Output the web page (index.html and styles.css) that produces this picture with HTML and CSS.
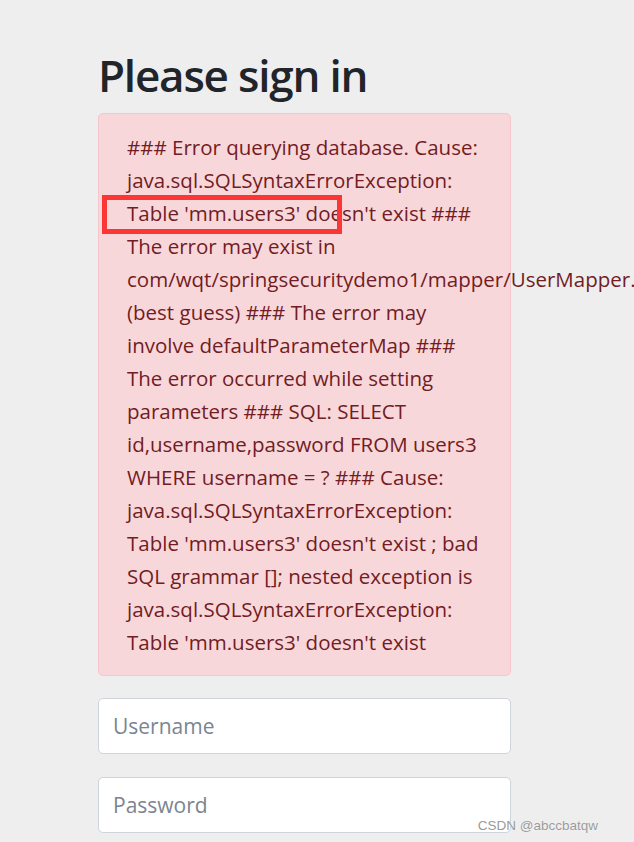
FILE: index.html
```html
<!DOCTYPE html>
<html lang="en">
<head>
<meta charset="utf-8">
<title>Please sign in</title>
<link rel="stylesheet" href="styles.css">
</head>
<body>
<div class="container">
  <form class="form-signin">
    <h2 class="form-signin-heading">Please sign in</h2>
    <div class="alert">
      ### Error querying database. Cause:<br>
      java.sql.SQLSyntaxErrorException:<br>
      Table 'mm.users3' doesn't exist ###<br>
      The error may exist in<br>
      com/wqt/springsecuritydemo1/mapper/UserMapper.xml<br>
      (best guess) ### The error may<br>
      involve defaultParameterMap ###<br>
      The error occurred while setting<br>
      parameters ### SQL: SELECT<br>
      id,username,password FROM users3<br>
      WHERE username = ? ### Cause:<br>
      java.sql.SQLSyntaxErrorException:<br>
      Table 'mm.users3' doesn't exist ; bad<br>
      SQL grammar []; nested exception is<br>
      java.sql.SQLSyntaxErrorException:<br>
      Table 'mm.users3' doesn't exist
      <span class="mark"></span>
    </div>
    <input class="form-control" type="text" placeholder="Username">
    <input class="form-control" type="password" placeholder="Password">
  </form>
</div>
<div class="watermark">CSDN @abccbatqw</div>
</body>
</html>
```
FILE: styles.css
```css
html, body {
  margin: 0;
  padding: 0;
  background: #eeeeee;
  overflow: hidden;
}
body {
  font-family: "Open Sans", "Noto Sans", sans-serif;
  color: #212529;
  height: 842px;
  position: relative;
}
.container {
  padding-left: 98px;
}
.form-signin {
  width: 413px;
  padding-top: 49px;
  display: flex;
  flex-direction: column;
}
.form-signin-heading {
  margin: 0 0 11px 0;
  font-size: 44px;
  line-height: 53px;
  font-weight: 600;
  color: #212529;
  letter-spacing: -1.2px;
}
.alert {
  position: relative;
  background: #f8d7da;
  border: 1px solid #f5c6cb;
  border-radius: 5px;
  color: #721c24;
  padding: 17px 27px 16px 28px;
  font-size: 20.5px;
  line-height: 33px;
  white-space: nowrap;
  margin-bottom: 22px;
}
.mark {
  position: absolute;
  left: 3px;
  top: 81px;
  width: 230px;
  height: 29px;
  border: 5px solid #fc3535;
}
.form-control {
  box-sizing: border-box;
  height: 56px;
  margin: 0 0 23px 0;
  padding: 0 14px;
  border: 1px solid #ced4da;
  border-radius: 5px;
  background: #fff;
  font-family: inherit;
  font-size: 21px;
  color: #495057;
  outline: none;
}
.form-control::placeholder {
  color: #7a8591;
}
.watermark {
  position: absolute;
  right: 36px;
  top: 818px;
  font-family: "Liberation Sans", Arial, sans-serif;
  font-size: 13.5px;
  color: #9a9a9a;
  text-shadow: 0 0 1px #fff;
}
```
